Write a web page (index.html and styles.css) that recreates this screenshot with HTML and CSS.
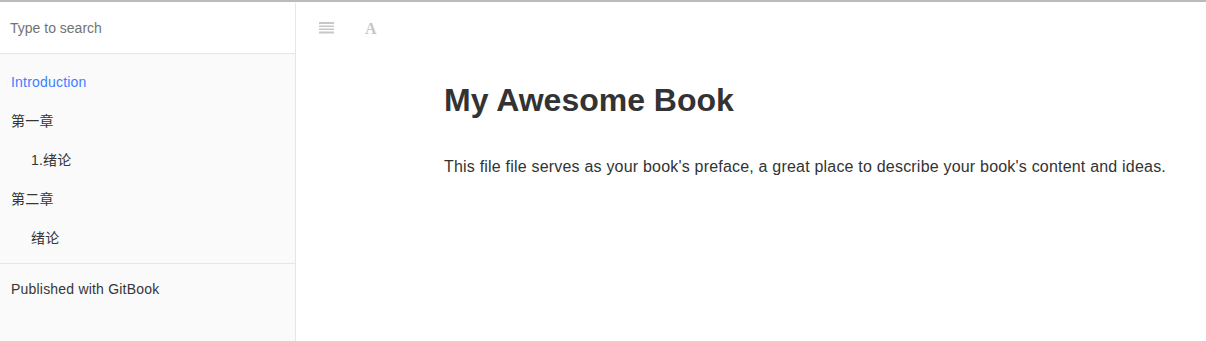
FILE: index.html
```html
<!DOCTYPE html>
<html lang="en">

<head>
  <meta charset="UTF-8">
  <meta name="viewport" content="width=device-width, initial-scale=1.0">
  <title>My Awesome Book</title>
  <link rel="stylesheet" href="styles.css">
</head>

<body>
  <div class="book">
    <nav class="book-summary">
      <div class="book-search">
        <input type="text" placeholder="Type to search">
      </div>
      <ul class="summary">
        <li class="chapter active"><a href="#">Introduction</a></li>
        <li class="chapter"><a href="#">第一章</a></li>
        <li class="chapter sub"><a href="#">1.绪论</a></li>
        <li class="chapter"><a href="#">第二章</a></li>
        <li class="chapter sub"><a href="#">绪论</a></li>
        <li class="divider"></li>
        <li class="chapter"><a href="#">Published with GitBook</a></li>
      </ul>
    </nav>

    <div class="book-body">
      <div class="book-header">
        <a class="btn" href="#" aria-label="Toggle sidebar">
          <svg width="15" height="12" viewBox="0 0 15 12">
            <rect x="0" y="0" width="15" height="2" fill="#c8c8c8"/>
            <rect x="0" y="3.5" width="15" height="1.5" fill="#c8c8c8"/>
            <rect x="0" y="6.5" width="15" height="1.5" fill="#c8c8c8"/>
            <rect x="0" y="9.5" width="15" height="2" fill="#c8c8c8"/>
          </svg>
        </a>
        <a class="btn font" href="#">A</a>
      </div>

      <section class="page">
        <h1>My Awesome Book</h1>
        <p>This file file serves as your book's preface, a great place to describe your book's content and ideas.</p>
      </section>
    </div>
  </div>
</body>

</html>
```

FILE: styles.css
```css
* {
  box-sizing: border-box;
}

html,
body {
  margin: 0;
  height: 100%;
}

body {
  font-family: 'Liberation Sans', 'Noto Sans CJK SC', sans-serif;
  color: #333;
  border-top: 2px solid #bbb;
  padding-top: 1px;
}

.book {
  display: flex;
  height: 100%;
}

.book-summary {
  width: 296px;
  flex-shrink: 0;
  background: #fafafa;
  border-right: 1px solid #e6e6e6;
}

.book-search {
  background: #fff;
  border-bottom: 1px solid #e6e6e6;
  height: 51px;
  display: flex;
  align-items: center;
}

.book-search input {
  border: none;
  outline: none;
  background: transparent;
  width: 100%;
  padding: 0 10px;
  font-family: inherit;
  font-size: 14px;
  color: #333;
}

.book-search input::placeholder {
  color: #737373;
}

.summary {
  list-style: none;
  margin: 0;
  padding: 9px 0 0;
}

.chapter a {
  display: block;
  padding: 10px 11px;
  line-height: 19px;
  font-size: 14px;
  letter-spacing: 0.2px;
  color: #363636;
  text-decoration: none;
}

.chapter.sub a {
  padding-left: 31px;
}

.chapter.active a {
  color: #3d7eff;
}

.divider {
  height: 1px;
  background: #e6e6e6;
  margin: 5px 0 6px;
}

.book-body {
  flex: 1;
}

.book-header {
  height: 50px;
  display: flex;
  align-items: center;
  padding-left: 23px;
  gap: 31px;
}

.btn {
  display: flex;
  align-items: center;
  text-decoration: none;
}

.btn.font {
  font-family: 'Liberation Serif', serif;
  font-weight: bold;
  font-size: 16px;
  color: #c6c6c6;
  margin-top: 1px;
}

.page {
  padding-left: 148px;
}

.page h1 {
  margin: 27px 0 0;
  font-size: 32px;
  line-height: 40px;
  color: #333;
}

.page p {
  margin: 35px 0 0;
  font-size: 16px;
  line-height: 24px;
  letter-spacing: 0.2px;
}
```
